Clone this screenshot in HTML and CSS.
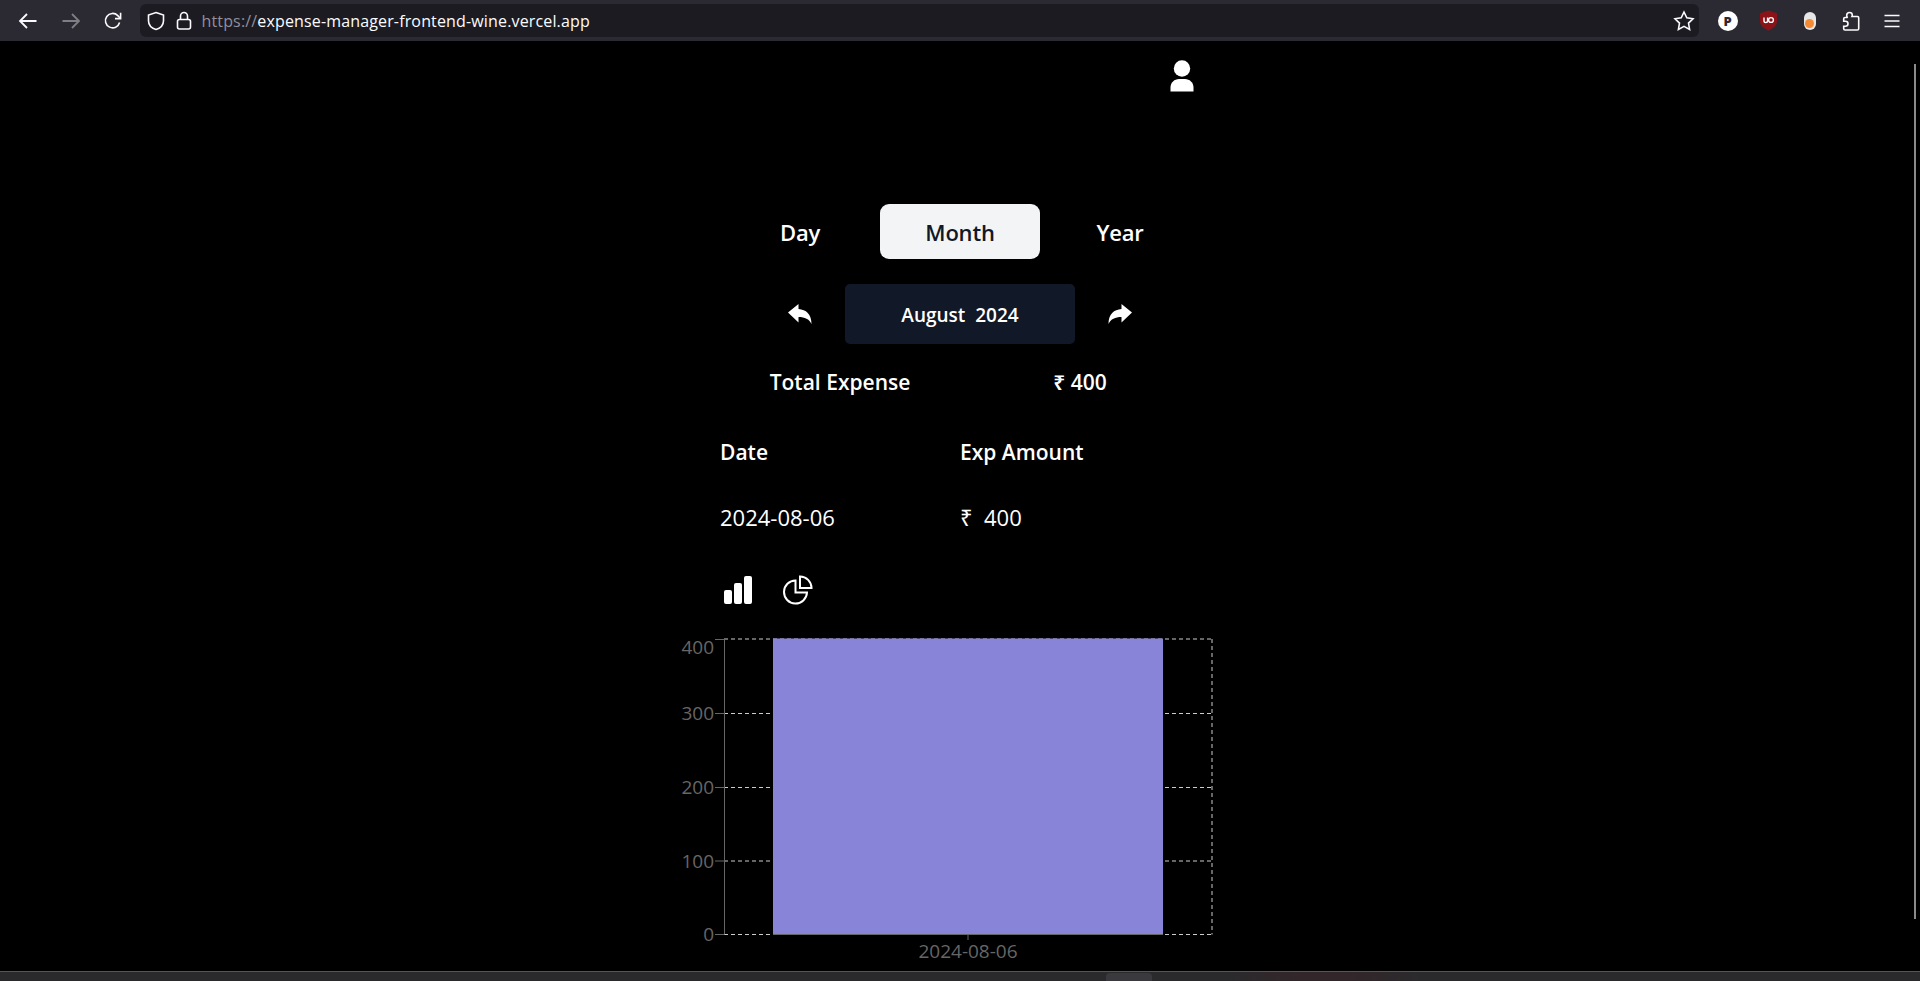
FILE: index.html
```html
<!doctype html>
<html lang="en-us">
<head>
    <meta charset="utf-8">
    <meta name="viewport" content="width=device-width, initial-scale=1">
    <title>Expense Manager</title>
    <link rel="stylesheet" href="styles.css">
</head>
<body>
    <!-- Browser toolbar -->
    <div class="toolbar">
        <div class="nav-btns">
            <span class="tool-btn"><svg width="20" height="20" viewBox="0 0 20 20" class="stroke-icon"><path d="M18.500 10H2M9 3l-7 7 7 7"/></svg></span>
            <span class="tool-btn dim"><svg width="20" height="20" viewBox="0 0 20 20" class="stroke-icon"><path d="M1.500 10H18M11 3l7 7-7 7"/></svg></span>
            <span class="tool-btn"><svg width="20" height="20" viewBox="0 0 20 20" class="stroke-icon thin"><path d="M16.600 11.500A7.200 7.200 0 1 1 14.800 4.600L17 7"/><path d="M17.600 1.800V7.600H12"/></svg></span>
        </div>
        <div class="url-bar">
            <svg width="20" height="20" viewBox="0 0 20 20" class="stroke-icon thin"><path d="M10 1.500l7.500 2.600v5.600c0 4.400-3.200 7.400-7.500 8.800-4.300-1.400-7.500-4.400-7.500-8.800V4.100z"/></svg>
            <svg class="lock-icon stroke-icon thin" width="18" height="20" viewBox="0 0 18 20"><rect x="2.500" y="8.500" width="13" height="9.500" rx="2"/><path d="M5.500 8.500V5a3.500 3.500 0 0 1 7 0v3.500"/></svg>
            <span class="url"><span class="url-scheme">https://</span>expense-manager-frontend-wine.vercel.app</span>
            <svg class="star-icon stroke-icon thin" width="22" height="22" viewBox="0 0 22 22"><path d="M11 2l2.800 5.800 6.200.9-4.500 4.400 1.100 6.300-5.600-3-5.600 3 1.100-6.300L2 8.700l6.200-.9z"/></svg>
        </div>
        <div class="ext-btns">
            <span class="tool-btn"><span class="ext-p">P</span></span>
            <span class="tool-btn"><svg width="19" height="21" viewBox="0 0 19 21"><path d="M9.500 0.500l8.500 2.700v8c0 4.300-3.800 7.300-8.500 9.300C4.800 18.500 1 15.500 1 11.200v-8z" fill="#8b1219"/><path d="M5 7.500v3.300a1.800 1.800 0 0 0 3.600 0V7.500" fill="none" stroke="#fff" stroke-width="1.400"/><circle cx="12" cy="10" r="2.400" fill="none" stroke="#fff" stroke-width="1.400"/></svg></span>
            <span class="tool-btn"><span class="ext-toggle"><span class="ext-dot"></span></span></span>
            <span class="tool-btn"><svg width="20" height="20" viewBox="0 0 20 20" class="stroke-icon thin"><path d="M8.500 1.500c1.700 0 2.800 1.200 2.800 2.600 0 .6-.2 1-.4 1.400h5.600c.8 0 1.200.5 1.200 1.200v11c0 .7-.5 1.300-1.300 1.300H4c-.8 0-1.300-.6-1.300-1.300v-2.500h1.700c1.500 0 2.600-1.100 2.600-2.500s-1.100-2.500-2.600-2.500H2.700V7.700c0-.7.5-1.200 1.200-1.200h2.200c.2 0 .3-.2.100-.5-.3-.5-.5-1.100-.5-1.800 0-1.500 1.100-2.700 2.800-2.700z"/></svg></span>
            <span class="tool-btn"><svg width="16" height="14" viewBox="0 0 16 14" class="stroke-icon thin"><path d="M0.500 1.500h15M0.500 7h15M0.500 12.500h15"/></svg></span>
        </div>
    </div>

    <!-- Page content -->
    <div class="page">
        <div class="column">
            <div class="user-row">
                <svg width="24" height="32" viewBox="0 0 24 32"><circle cx="12" cy="8.500" r="8.200" fill="#fff"/><path d="M0.500 31.500v-4c0-5 4-8.500 8.500-8.500h6c4.500 0 8.500 3.500 8.500 8.500v4z" fill="#fff"/></svg>
            </div>

            <div class="tabs">
                <div class="tab">Day</div>
                <div class="tab active">Month</div>
                <div class="tab">Year</div>
            </div>

            <div class="period">
                <svg width="24" height="20" viewBox="0 0 24 20"><path d="M0 8.500L10.500 0v5c7.500.5 13 5 13 15-2.500-5-6.500-7-13-7v5.500z" fill="#fff"/></svg>
                <div class="period-label">August&nbsp; 2024</div>
                <svg width="24" height="20" viewBox="0 0 24 20"><path d="M24 8.500L13.500 0v5C6 5.500 .5 10 .5 20c2.500-5 6.500-7 13-7v5.500z" fill="#fff"/></svg>
            </div>

            <div class="total">
                <div>Total Expense</div>
                <div>₹ 400</div>
            </div>

            <div class="exp-table">
                <div class="exp-head">Date</div>
                <div class="exp-head">Exp Amount</div>
                <div class="exp-cell">2024-08-06</div>
                <div class="exp-cell">₹&nbsp; 400</div>
            </div>

            <div class="chart-types">
                <svg width="30" height="30" viewBox="0 0 30 30"><rect x="1" y="15" width="8" height="14" rx="2" fill="#fff"/><rect x="11" y="8" width="8" height="21" rx="2" fill="#fff"/><rect x="21" y="1" width="8" height="28" rx="2" fill="#fff"/></svg>
                <svg width="30" height="30" viewBox="0 0 30 30" fill="none" stroke="#fff" stroke-width="2"><path d="M12.500 5.500a11.500 11.500 0 1 0 11.500 12H12.500z"/><path d="M17 1.500a11.500 11.500 0 0 1 11.500 11.500H17z"/></svg>
            </div>

            <svg class="chart" width="520" height="340" viewBox="0 0 520 340">
                <g class="grid">
                    <path d="M24.500 5V300.500M512 5V300.500M24 5H512M24 300.500H512M24 227H512M24 153.500H512M24 79.500H512"/>
                </g>
                <rect x="73" y="4.500" width="390" height="296" fill="#8884d8"/>
                <g class="axis">
                    <path d="M24.500 5V300.500M73 300.500H463M15 300.500H24M15 227H24M15 153.500H24M15 79.500H24M15 5.500H24M268 300.500V306"/>
                </g>
                <g class="tick-text">
                    <text x="14" y="307" text-anchor="end">0</text>
                    <text x="14" y="233.500" text-anchor="end">100</text>
                    <text x="14" y="160" text-anchor="end">200</text>
                    <text x="14" y="86" text-anchor="end">300</text>
                    <text x="14" y="20" text-anchor="end">400</text>
                    <text x="268" y="324" text-anchor="middle">2024-08-06</text>
                </g>
            </svg>
        </div>
        <div class="scroll-thumb"></div>
    </div>

    <!-- Strip of the window below the page -->
    <div class="bottom-strip"><span class="strip-tab"></span></div>
</body>
</html>
```
FILE: styles.css
```css
html, body {
    width: 100%;
    height: 100%;
}

body {
    margin: 0;
    padding: 0;
    background: #000;
    color: #fff;
    font-family: "Open Sans", "Noto Sans", sans-serif;
    overflow: hidden;
    display: flex;
    flex-direction: column;
}

/* Browser toolbar */
.toolbar {
    height: 41px;
    flex: none;
    background: #2b2a33;
    display: flex;
    align-items: center;
    padding: 0 8px 0 7px;
    box-sizing: border-box;
}

.nav-btns {
    display: flex;
    margin-right: 5px;
}

.nav-btns .tool-btn {
    width: 42.500px;
}

.tool-btn {
    width: 41px;
    height: 32px;
    display: flex;
    align-items: center;
    justify-content: center;
}

.tool-btn.dim {
    opacity: 0.4;
}

.stroke-icon {
    fill: none;
    stroke: #fbfbfe;
    stroke-width: 1.800;
}

.stroke-icon.thin {
    stroke-width: 1.600;
}

.url-bar {
    flex: 1;
    height: 33px;
    margin-right: 8px;
    background: #1c1b22;
    border-radius: 6px;
    display: flex;
    align-items: center;
    padding: 0 5px 0 6px;
}

.lock-icon {
    margin-left: 9px;
}

.url {
    margin-left: 9px;
    font-size: 16px;
    letter-spacing: 0.150px;
    color: #fbfbfe;
}

.url-scheme {
    color: #8f8f9d;
}

.star-icon {
    margin-left: auto;
    margin-right: -1px;
}

.ext-btns {
    display: flex;
}

.ext-p {
    width: 20px;
    height: 20px;
    border-radius: 50%;
    background: #fff;
    color: #2b2a33;
    font-size: 13px;
    font-weight: 800;
    display: flex;
    align-items: center;
    justify-content: center;
}

.ext-toggle {
    width: 12px;
    height: 18px;
    border-radius: 6px;
    background: #e6e6e6;
    position: relative;
}

.ext-dot {
    position: absolute;
    left: 1.500px;
    bottom: 1.500px;
    width: 9px;
    height: 9px;
    border-radius: 50%;
    background: #f58a33;
}

/* Page */
.page {
    flex: 1;
    position: relative;
    overflow: hidden;
}

.column {
    width: 520px;
    margin: 0 auto;
}

.user-row {
    display: flex;
    justify-content: flex-end;
    padding: 19px 26px 0 0;
    height: 144px;
}

.tabs {
    display: grid;
    grid-template-columns: repeat(3, 160px);
    justify-content: center;
}

.tab {
    height: 54px;
    padding-top: 1px;
    display: flex;
    align-items: center;
    justify-content: center;
    font-size: 22px;
    font-weight: 600;
    letter-spacing: -0.200px;
}

.tab.active {
    background: #f3f4f6;
    color: #111827;
    border-radius: 9px;
}

.period {
    margin-top: 25px;
    display: grid;
    grid-template-columns: 160px 160px 160px;
    justify-content: center;
    align-items: center;
    justify-items: center;
}

.period-label {
    width: 230px;
    height: 59px;
    padding-top: 1px;
    background: #111827;
    border-radius: 5px;
    display: flex;
    align-items: center;
    justify-content: center;
    font-size: 19px;
    font-weight: 600;
}

.total {
    display: grid;
    grid-template-columns: 240px 240px;
    justify-content: center;
    justify-items: center;
    margin-top: 24px;
    font-size: 21px;
    font-weight: 600;
}

.exp-table {
    display: grid;
    grid-template-columns: 240px 240px;
    justify-content: center;
    margin-top: 23px;
    grid-auto-rows: 65px;
    align-items: center;
    font-size: 21px;
}

.exp-head {
    font-weight: 600;
}

.exp-cell {
    font-size: 22px;
}

.chart-types {
    display: flex;
    gap: 30px;
    padding: 0 0 0 23px;
    margin-top: 26px;
    height: 30px;
}

.chart {
    display: block;
    margin-top: 29px;
    overflow: visible;
}

.grid path {
    fill: none;
    stroke: #ccc;
    stroke-width: 1;
    stroke-dasharray: 4 3;
}

.axis path {
    fill: none;
    stroke: #666;
    stroke-width: 1;
}

.tick-text text {
    fill: #666;
    font-size: 19px;
}

.scroll-thumb {
    position: absolute;
    right: 4px;
    top: 23px;
    width: 2px;
    height: 855px;
    background: #8a8a8a;
}

.bottom-strip {
    height: 9px;
    flex: none;
    background: linear-gradient(90deg, #2a2a2c 64%, #33262a 68%, #33262a 70%, #2a2a2c 74%);
    border-top: 1px solid #55555a;
    display: flex;
    padding-left: 1106px;
}

.strip-tab {
    width: 46px;
    height: 8px;
    margin-top: 1px;
    background: #3a3a3e;
    border-radius: 4px 4px 0 0;
}
```
